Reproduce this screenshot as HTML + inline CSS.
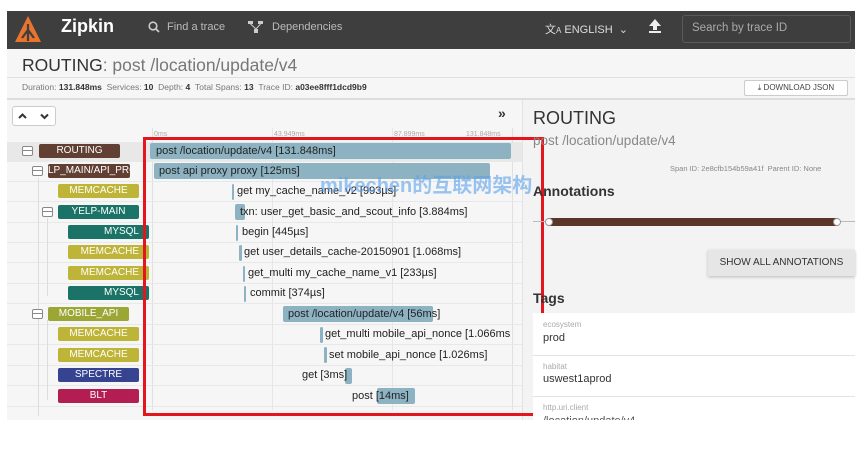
<!DOCTYPE html>
<html><head><meta charset="utf-8"><style>
*{margin:0;padding:0;box-sizing:border-box}
body{width:865px;height:449px;background:#fff;font-family:"Liberation Sans","Noto Sans CJK SC",sans-serif;position:relative;overflow:hidden;color:#333}
.a{position:absolute}
.hdr{left:7px;top:11px;width:848px;height:38px;background:#3e3e3e}
.svc{position:absolute;height:14px;width:81px;color:#fff;font-size:10px;text-align:center;line-height:14px;border-radius:2px;opacity:.95}
.tog{position:absolute;width:11px;height:10px;border:1.5px solid #888;border-radius:2px;background:#fff}
.tog:after{content:"";position:absolute;left:0;right:0;top:3px;border-top:1.5px solid #888}
.bar{position:absolute;height:16px;background:#8db3c3;border-radius:2px}
.bt{position:absolute;font-size:11px;color:#222;white-space:nowrap;line-height:14px}
.row{position:absolute;left:7px;width:515px;height:20px;border-bottom:1px solid #e8e8e8}
</style></head><body>
<div style="position:absolute;left:7px;top:49px;width:848px;height:371px;background:#f6f6f6"></div>
<div class="a hdr"></div>
<svg class="a" style="left:13px;top:14px" width="30" height="32" viewBox="0 0 30 32"><path d="M15 2 L28 28 L2 28 Z" fill="#e8742e"/><path d="M15 10 L15 27 M9 24 L15 16 L21 24" stroke="#3e3e3e" stroke-width="2.2" fill="none"/></svg>
<div class="a" style="left:61px;top:16px;color:#fff;font-weight:bold;font-size:18px">Zipkin</div>
<svg class="a" style="left:148px;top:21px" width="12" height="12"><circle cx="5" cy="5" r="3.8" stroke="#ccc" stroke-width="1.6" fill="none"/><path d="M8 8 L11 11" stroke="#ccc" stroke-width="1.8"/></svg>
<div class="a" style="left:167px;top:21px;color:#bbb;font-size:11px">Find a trace</div>
<svg class="a" style="left:248px;top:20px" width="16" height="14"><rect x="0" y="1" width="5" height="3" fill="#ccc"/><rect x="10" y="1" width="5" height="3" fill="#ccc"/><rect x="6" y="9" width="4" height="4" fill="#ccc"/><path d="M2.5 4 L8 9 M12.5 4 L8 9" stroke="#ccc"/></svg>
<div class="a" style="left:272px;top:21px;color:#bbb;font-size:11px">Dependencies</div>
<div class="a" style="left:545px;top:21px;color:#ddd;font-size:11px">文<span style="font-size:8px">A</span> ENGLISH &nbsp;⌄</div>
<svg class="a" style="left:648px;top:18px" width="14" height="16"><path d="M7 1 L13 8 H9 V12 H5 V8 H1 Z" fill="#eee"/><rect x="1" y="13" width="12" height="2" fill="#eee"/></svg>
<div class="a" style="left:682px;top:15px;width:169px;height:28px;border:1px solid #5a5a5a;border-radius:3px;color:#aaa;font-size:11.5px;padding:6px 9px">Search by trace ID</div>
<div class="a" style="left:22px;top:55px;font-size:17.5px;color:#333">ROUTING<span style="color:#777">: post /location/update/v4</span></div>
<div class="a" style="left:22px;top:82px;font-size:8.5px;color:#777">Duration: <b style="color:#333">131.848ms</b> &nbsp;Services: <b style="color:#333">10</b> &nbsp;Depth: <b style="color:#333">4</b> &nbsp;Total Spans: <b style="color:#333">13</b> &nbsp;Trace ID: <b style="color:#333">a03ee8fff1dcd9b9</b></div>
<div class="a" style="left:7px;top:77px;width:848px;border-top:1px solid #e0e0e0"></div>
<div class="a" style="left:744px;top:80px;width:104px;height:16px;border:1px solid #ccc;background:#fff;border-radius:2px;font-size:8px;color:#444;text-align:center;line-height:14px">⤓ DOWNLOAD JSON</div>
<div class="a" style="left:7px;top:98px;width:848px;border-top:2px solid #ddd"></div>
<div class="a" style="left:522px;top:100px;width:333px;height:320px;background:#f3f3f3;border-left:1px solid #e3e3e3"></div>
<div class="a" style="left:12px;top:106px;width:44px;height:20px;border:1px solid #ccc;background:#fff;border-radius:3px"></div>
<svg class="a" style="left:17px;top:111px" width="34" height="10"><path d="M2 7 L5.5 3.5 L9 7 M24 3.5 L27.5 7 L31 3.5" stroke="#333" stroke-width="2" fill="none"/></svg>
<div class="a" style="left:498px;top:105px;font-weight:bold;font-size:14px">»</div>
<div class="a" style="left:152px;top:128px;width:1px;height:282px;background:#e0e0e0"></div>
<div class="a" style="left:272px;top:128px;width:1px;height:282px;background:#e6e6e6"></div>
<div class="a" style="left:392px;top:128px;width:1px;height:282px;background:#e6e6e6"></div>
<div class="a" style="left:512px;top:128px;width:1px;height:282px;background:#e0e0e0"></div>
<div class="a" style="left:154px;top:131px;font-size:7px;color:#aaa">0ms</div>
<div class="a" style="left:274px;top:131px;font-size:7px;color:#aaa">43.949ms</div>
<div class="a" style="left:394px;top:131px;font-size:7px;color:#aaa">87.899ms</div>
<div class="a" style="left:466px;top:131px;font-size:7px;color:#aaa">131.848ms</div>
<div class="row" style="top:142px;background:#e8e8e8"></div>
<div class="row" style="top:162px"></div><div class="row" style="top:182px"></div><div class="row" style="top:203px"></div><div class="row" style="top:223px"></div><div class="row" style="top:243px"></div><div class="row" style="top:264px"></div><div class="row" style="top:284px"></div><div class="row" style="top:305px"></div><div class="row" style="top:325px"></div><div class="row" style="top:346px"></div><div class="row" style="top:366px"></div><div class="row" style="top:387px"></div>
<div class="a" style="left:38px;top:178px;height:238px;border-left:1px solid #ddd"></div>
<div class="a" style="left:47px;top:218px;height:78px;border-left:1px solid #ddd"></div>
<div class="a" style="left:47px;top:320px;height:80px;border-left:1px solid #ddd"></div>
<div class="tog" style="left:22px;top:146px"></div>
<div class="tog" style="left:32px;top:166px"></div>
<div class="tog" style="left:42px;top:207px"></div>
<div class="tog" style="left:32px;top:309px"></div>
<div class="svc" style="left:39px;top:144px;background:#5a3629">ROUTING</div>
<div class="svc" style="left:48px;top:164px;background:#5a3629;width:82px;overflow:hidden;white-space:nowrap">LP_MAIN/API_PRO</div>
<div class="svc" style="left:58px;top:184px;background:#bcb22e">MEMCACHE</div>
<div class="svc" style="left:58px;top:205px;background:#0f6d5f">YELP-MAIN</div>
<div class="svc" style="left:68px;top:225px;background:#0f6d5f;text-align:right;padding-right:10px">MYSQL</div>
<div class="svc" style="left:68px;top:245px;background:#bcb22e;text-align:right;padding-right:10px">MEMCACHE</div>
<div class="svc" style="left:68px;top:266px;background:#bcb22e;text-align:right;padding-right:10px">MEMCACHE</div>
<div class="svc" style="left:68px;top:286px;background:#0f6d5f;text-align:right;padding-right:10px">MYSQL</div>
<div class="svc" style="left:48px;top:307px;background:#97a22a">MOBILE_API</div>
<div class="svc" style="left:58px;top:327px;background:#bcb22e">MEMCACHE</div>
<div class="svc" style="left:58px;top:348px;background:#bcb22e">MEMCACHE</div>
<div class="svc" style="left:58px;top:368px;background:#2b3a8c">SPECTRE</div>
<div class="svc" style="left:58px;top:389px;background:#b0124a">BLT</div>
<div class="bar" style="left:150px;top:143px;width:361px"></div><div class="bt" style="left:156px;top:144px">post /location/update/v4 [131.848ms]</div>
<div class="bar" style="left:154px;top:163px;width:336px"></div><div class="bt" style="left:159px;top:164px">post api proxy proxy [125ms]</div>
<div class="bar" style="left:232px;top:184px;width:2px"></div><div class="bt" style="left:237px;top:184px">get my_cache_name_v2 [993µs]</div>
<div class="bar" style="left:235px;top:204px;width:10px"></div><div class="bt" style="left:240px;top:205px">txn: user_get_basic_and_scout_info [3.884ms]</div>
<div class="bar" style="left:236px;top:225px;width:2px"></div><div class="bt" style="left:242px;top:225px">begin [445µs]</div>
<div class="bar" style="left:239px;top:245px;width:3px"></div><div class="bt" style="left:244px;top:245px">get user_details_cache-20150901 [1.068ms]</div>
<div class="bar" style="left:243px;top:266px;width:2px"></div><div class="bt" style="left:248px;top:266px">get_multi my_cache_name_v1 [233µs]</div>
<div class="bar" style="left:244px;top:286px;width:2px"></div><div class="bt" style="left:250px;top:286px">commit [374µs]</div>
<div class="bar" style="left:283px;top:306px;width:150px"></div><div class="bt" style="left:288px;top:307px">post /location/update/v4 [56ms]</div>
<div class="bar" style="left:320px;top:327px;width:3px"></div><div class="bt" style="left:325px;top:327px">get_multi mobile_api_nonce [1.066ms</div>
<div class="bar" style="left:324px;top:347px;width:3px"></div><div class="bt" style="left:329px;top:348px">set mobile_api_nonce [1.026ms]</div>
<div class="bar" style="left:345px;top:368px;width:7px"></div><div class="bt" style="left:302px;top:368px">get [3ms]</div>
<div class="bar" style="left:377px;top:388px;width:38px"></div><div class="bt" style="left:352px;top:389px">post [14ms]</div>
<div class="a" style="left:143px;top:137px;width:401px;height:279px;border:3px solid #e3161d"></div>
<div class="a" style="left:533px;top:108px;font-size:18px;color:#333">ROUTING</div>
<div class="a" style="left:533px;top:133px;font-size:13.5px;color:#888">post /location/update/v4</div>
<div class="a" style="left:670px;top:164px;font-size:7.5px;color:#888">Span ID: 2e8cfb154b59a41f &nbsp;Parent ID: None</div>
<div class="a" style="left:533px;top:183px;font-size:14px;font-weight:bold;color:#333">Annotations</div>
<div class="a" style="left:533px;top:221px;width:322px;border-top:1px solid #bbb"></div>
<div class="a" style="left:548px;top:218px;width:290px;height:8px;background:#5a3629"></div>
<div class="a" style="left:545px;top:218px;width:8px;height:8px;border-radius:50%;background:#fff;border:1px solid #999"></div>
<div class="a" style="left:833px;top:218px;width:8px;height:8px;border-radius:50%;background:#fff;border:1px solid #999"></div>
<div class="a" style="left:708px;top:250px;width:147px;height:26px;background:#e6e6e6;box-shadow:0 1px 3px #bbb;font-size:10px;color:#333;text-align:center;line-height:26px">SHOW ALL ANNOTATIONS</div>
<div class="a" style="left:533px;top:290px;font-size:14px;font-weight:bold;color:#333">Tags</div>
<div class="a" style="left:533px;top:313px;width:322px;height:107px;background:#fff"></div>
<div class="a" style="left:533px;top:355px;width:322px;border-top:1px solid #e3e3e3"></div>
<div class="a" style="left:533px;top:396px;width:322px;border-top:1px solid #e3e3e3"></div>
<div class="a" style="left:543px;top:320px;font-size:8px;color:#aaa">ecosystem</div>
<div class="a" style="left:543px;top:332px;font-size:11px;color:#333">prod</div>
<div class="a" style="left:543px;top:362px;font-size:8px;color:#aaa">habitat</div>
<div class="a" style="left:543px;top:373px;font-size:11px;color:#333">uswest1aprod</div>
<div class="a" style="left:543px;top:403px;font-size:8px;color:#aaa">http.uri.client</div>
<div class="a" style="left:543px;top:415px;font-size:11px;color:#555;height:5px;overflow:hidden">/location/update/v4</div>
<div class="a" style="left:320px;top:169px;font-size:20px;font-weight:bold;color:rgba(90,160,235,.6);white-space:nowrap">mikechen的互联网架构</div>
</body></html>
